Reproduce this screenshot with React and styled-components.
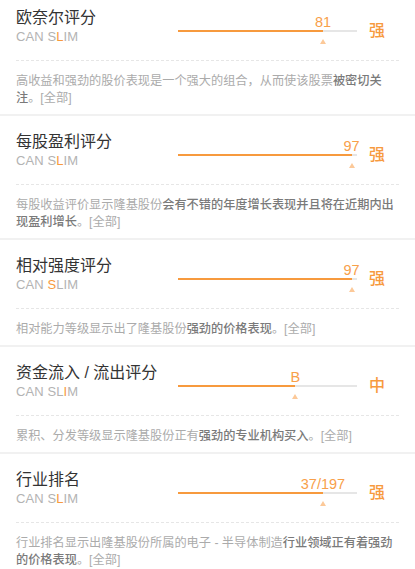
import React from "react";
import styled, { createGlobalStyle } from "styled-components";

const ORANGE = "#f79a3e";

const GlobalStyle = createGlobalStyle`
  html, body {
    margin: 0;
    padding: 0;
    background: #ffffff;
  }
  body {
    font-family: "Liberation Sans", "Noto Sans CJK SC", sans-serif;
    -webkit-font-smoothing: antialiased;
  }
`;

const Page = styled.div`
  width: 415px;
  background: #fff;
`;

const Section = styled.section`
  padding: ${(p) => (p.$first ? "8px" : "16px")} 16px 7px;
  border-bottom: 2px solid #f1f1f1;
`;

const Header = styled.div`
  display: flex;
  align-items: flex-start;
  height: 38px;
`;

const TitleBlock = styled.div`
  flex: 1;
  min-width: 0;
`;

const Title = styled.div`
  font-size: 16px;
  line-height: 20px;
  color: #333333;
`;

const Caption = styled.div`
  font-size: 13px;
  line-height: 18px;
  color: #b3b3b3;
  letter-spacing: 0.1px;
`;

const Hi = styled.span`
  color: ${ORANGE};
`;

const Gauge = styled.div`
  position: relative;
  width: 179px;
  height: 38px;
  padding-top: 22px;
  box-sizing: border-box;
`;

const Track = styled.div`
  height: 2px;
  background: #e6e6e6;
`;

const Fill = styled.div`
  height: 100%;
  background: ${ORANGE};
`;

const Value = styled.div`
  position: absolute;
  top: 6px;
  transform: translateX(-50%);
  font-size: 14.5px;
  line-height: 17px;
  color: #f8a04a;
  white-space: nowrap;
`;

const Pointer = styled.div`
  position: absolute;
  top: 31px;
  width: 0;
  height: 0;
  transform: translateX(-50%);
  border-left: 3px solid transparent;
  border-right: 3px solid transparent;
  border-bottom: 5px solid #fcc999;
`;

const Grade = styled.div`
  width: 42px;
  box-sizing: border-box;
  padding-left: 12px;
  margin-top: 13px;
  font-size: 16px;
  line-height: 20px;
  font-weight: 500;
  color: ${ORANGE};
`;

const Divider = styled.div`
  margin-top: 14px;
  border-top: 1px dashed #e6e6e6;
`;

const Desc = styled.p`
  margin: 12px 0 0;
  font-size: 12.2px;
  line-height: 17px;
  color: #ababab;
`;

const Strong = styled.span`
  color: #7a7a7a;
  font-weight: 500;
`;

const items = [
  {
    title: "欧奈尔评分",
    hi: 5,
    pct: 81,
    value: "81",
    grade: "强",
    desc: ["高收益和强劲的股价表现是一个强大的组合，从而使该股票", "被密切关注"],
  },
  {
    title: "每股盈利评分",
    hi: 5,
    pct: 97,
    value: "97",
    grade: "强",
    desc: ["每股收益评价显示隆基股份", "会有不错的年度增长表现并且将在近期内出现盈利增长"],
  },
  {
    title: "相对强度评分",
    hi: 4,
    pct: 97,
    value: "97",
    grade: "强",
    desc: ["相对能力等级显示出了隆基股份", "强劲的价格表现"],
  },
  {
    title: "资金流入 / 流出评分",
    hi: 6,
    pct: 65.5,
    value: "B",
    grade: "中",
    desc: ["累积、分发等级显示隆基股份正有", "强劲的专业机构买入"],
  },
  {
    title: "行业排名",
    hi: 5,
    pct: 81,
    value: "37/197",
    grade: "强",
    desc: ["行业排名显示出隆基股份所属的电子 - 半导体制造", "行业领域正有着强劲的价格表现"],
  },
];

const CanSlim = ({ hi }) => {
  const word = "CAN SLIM";
  return (
    <Caption>
      {word.slice(0, hi)}
      <Hi>{word[hi]}</Hi>
      {word.slice(hi + 1)}
    </Caption>
  );
};

const ScoreCard = ({ item, first }) => (
  <Section $first={first}>
    <Header>
      <TitleBlock>
        <Title>{item.title}</Title>
        <CanSlim hi={item.hi} />
      </TitleBlock>
      <Gauge>
        <Track>
          <Fill style={{ width: `${item.pct}%` }} />
        </Track>
        <Value style={{ left: `${item.pct}%` }}>{item.value}</Value>
        <Pointer style={{ left: `${item.pct}%` }} />
      </Gauge>
      <Grade>{item.grade}</Grade>
    </Header>
    <Divider />
    <Desc>
      {item.desc[0]}
      <Strong>{item.desc[1]}</Strong>
      。[全部]
    </Desc>
  </Section>
);

const App = () => (
  <Page>
    <GlobalStyle />
    {items.map((item, i) => (
      <ScoreCard key={i} item={item} first={i === 0} />
    ))}
  </Page>
);

export default App;
